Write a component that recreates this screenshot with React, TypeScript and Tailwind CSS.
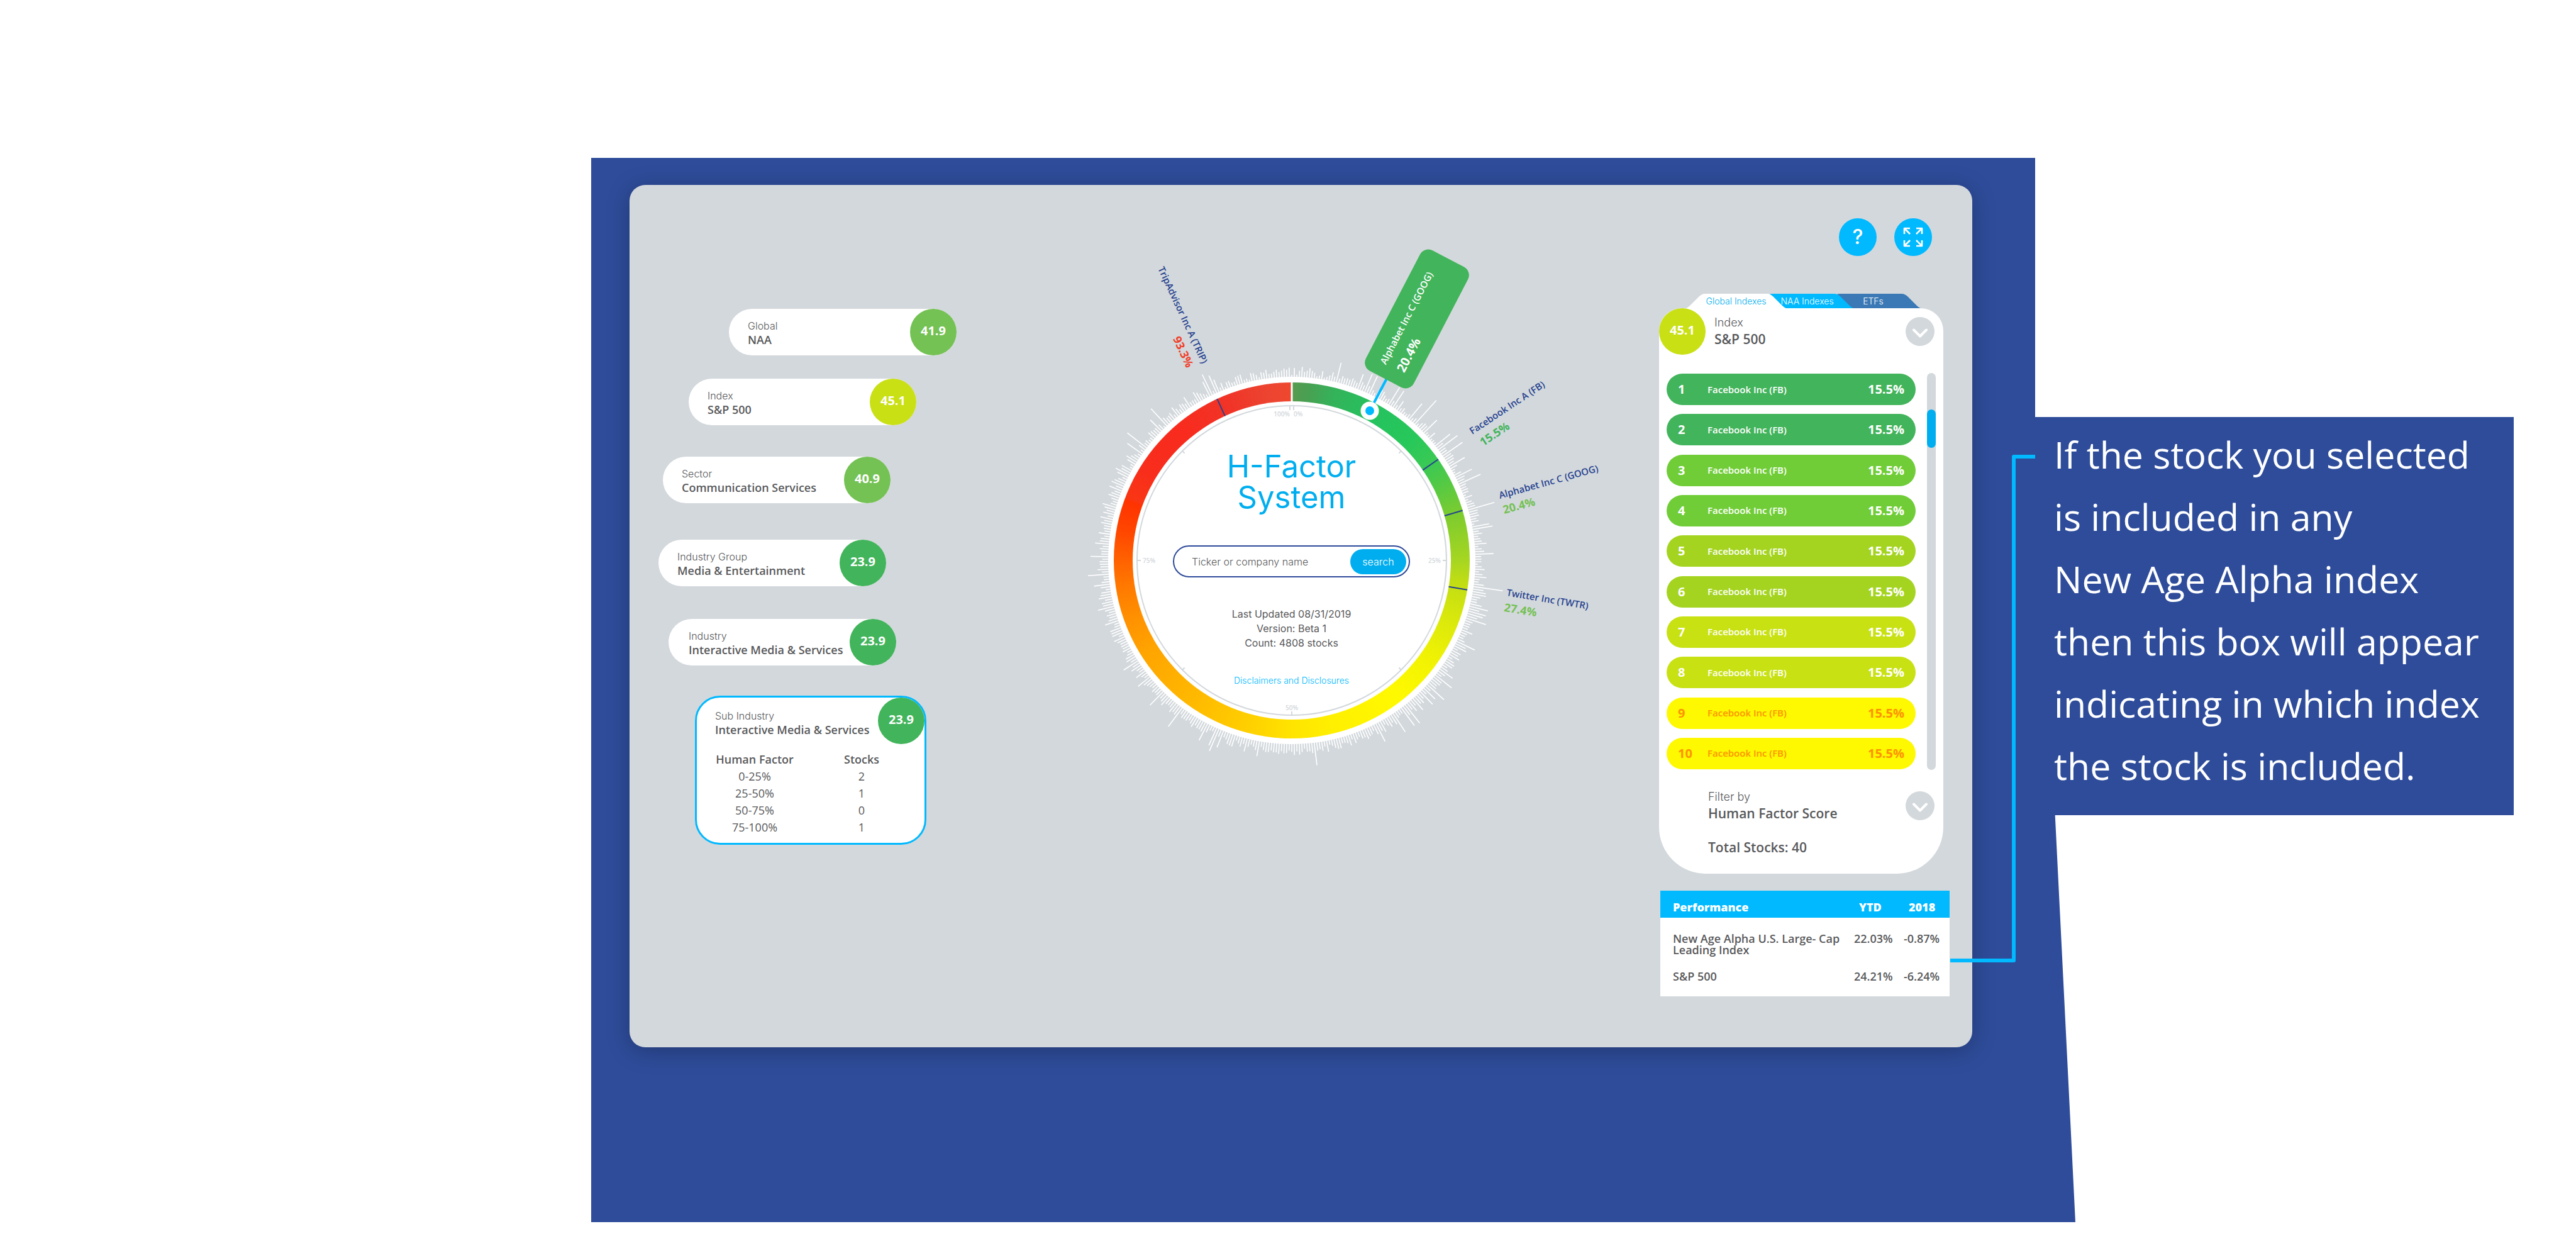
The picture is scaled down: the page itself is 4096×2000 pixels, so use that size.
import React from "react";

type Level = { label: string; name: string; score: string; tone: string; place: string };

const LEVELS: Level[] = [
  { label: "Global", name: "NAA", score: "41.9", tone: "bg-[#74c154]", place: "ml-[158px] pl-[30px]" },
  { label: "Index", name: "S&P 500", score: "45.1", tone: "bg-[#c9e015]", place: "mt-[37px] ml-[94px] pl-[30px]" },
  { label: "Sector", name: "Communication Services", score: "40.9", tone: "bg-[#74c154]", place: "mt-[50px] ml-[53px] pl-[30px]" },
  { label: "Industry Group", name: "Media & Entertainment", score: "23.9", tone: "bg-[#42b45b]", place: "mt-[58px] ml-[46px] pl-[30px]" },
  { label: "Industry", name: "Interactive Media & Services", score: "23.9", tone: "bg-[#42b45b]", place: "mt-[52px] ml-[62px] pl-8" },
];

const BUCKETS = [
  ["0-25%", "2"],
  ["25-50%", "1"],
  ["50-75%", "0"],
  ["75-100%", "1"],
];

const ROW_TONES = [
  "bg-[#42b45b] text-white",
  "bg-[#42b45b] text-white",
  "bg-[#70cd37] text-white",
  "bg-[#70cd37] text-white",
  "bg-[#a4d420] text-white",
  "bg-[#a4d420] text-white",
  "bg-[#c8e113] text-white",
  "bg-[#c8e113] text-white",
  "bg-[#fef900] text-[#ff9100]",
  "bg-[#fef900] text-[#ff9100]",
];

/* Peaks of the distribution: [clockwise angle from the top, length]. */
const PEAKS: [number, number][] = [
  [2.8, 17], [5.3, 16], [14.4, 33], [21.1, 26], [23.4, 32], [25, 32], [31.8, 33], [33.3, 32], [35, 18], [40.1, 33],
  [41.8, 52], [46.2, 30], [51.5, 31], [53.1, 39], [55.4, 39], [59.2, 29], [62.9, 30], [65.3, 39], [74.4, 44],
  [79.7, 28], [80.5, 33], [85, 20], [88, 30], [90, 16], [97.9, 48], [99.5, 22], [100.9, 23], [104.7, 31],
  [105.6, 30], [107, 26], [108.5, 34], [116.1, 33], [118, 22], [126, 26], [128.2, 34], [132.7, 37], [134, 26],
  [135.8, 29], [138.8, 25], [142.1, 38], [143, 36], [146.4, 36], [153.1, 33], [158, 14], [162.2, 18], [173.3, 37],
  [190.4, 25], [194.2, 22], [202, 29], [203, 39], [204, 31], [207.5, 31], [211, 18], [216.3, 38], [224.5, 31],
  [230.5, 25], [237, 28], [247.4, 19], [251.1, 23], [255.6, 27], [259, 22], [262.3, 26], [266, 34], [271.2, 29],
  [274.9, 23], [277.8, 19], [283, 21], [286.7, 23], [292.5, 22], [294.1, 22], [297.7, 25], [302, 20], [305.3, 30],
  [307.6, 40], [315, 26], [317.3, 38], [321.8, 18], [326.2, 20], [329.9, 19], [333.6, 26], [334.6, 37],
  [335.9, 31], [337, 22], [342.7, 14], [344, 15], [348.6, 13], [352.5, 15],
];

const BAR_COUNT = 462;
const DISC = 291;

const SPIKES = Array.from({ length: BAR_COUNT }, (_, i) => {
  const angle = (i * 360) / BAR_COUNT;
  const peak = PEAKS.find(([a]) => Math.abs(a - angle) <= 180 / BAR_COUNT);
  const noise = Math.abs(Math.sin(i * 12.9898) * 43758.5453) % 1;
  const floor = angle > 95 && angle < 300 ? 8 : 4;
  return { angle, length: peak ? peak[1] : floor + noise * 12 };
});

function polar(angle: number, radius: number) {
  const t = (angle * Math.PI) / 180;
  return { x: Math.sin(t) * radius, y: -Math.cos(t) * radius };
}

function Radial({ angle, from, to }: { angle: number; from: number; to: number }) {
  const a = polar(angle, from);
  const b = polar(angle, to);
  return <line x1={a.x} y1={a.y} x2={b.x} y2={b.y} />;
}

function Chevron() {
  return (
    <svg viewBox="0 0 46 46" className="size-full" fill="none" stroke="white" strokeWidth="4" strokeLinecap="round" strokeLinejoin="round" aria-hidden="true">
      <path d="M13 20.5 23 30.5 33 20.5" />
    </svg>
  );
}

function Score({ tone, children }: { tone: string; children: React.ReactNode }) {
  return (
    <span className={`flex size-[74px] shrink-0 items-center justify-center rounded-full pb-1 text-xl font-bold text-white ${tone}`}>
      {children}
    </span>
  );
}

function LevelPill({ level }: { level: Level }) {
  return (
    <div className={`flex h-[74px] w-[362px] items-center justify-between rounded-full bg-white ${level.place}`}>
      <p className="pt-0.5 text-lg leading-[22px] whitespace-nowrap">
        <span className="block font-['Inter',sans-serif] text-base leading-[22px] font-light">{level.label}</span>
        <span className="block leading-[22px] font-semibold">{level.name}</span>
      </p>
      <Score tone={level.tone}>{level.score}</Score>
    </div>
  );
}

function SubIndustry() {
  return (
    <section className="relative mt-12 ml-[104px] h-[237px] w-[368px] rounded-[40px] border-[3px] border-[#00b9ff] bg-white pt-[18px] pl-[29px] text-lg leading-[22px]">
      <div className="absolute top-0 right-0">
        <Score tone="bg-[#42b45b]">23.9</Score>
      </div>
      <p className="font-['Inter',sans-serif] text-base leading-[22px] font-light">Sub Industry</p>
      <p className="leading-[22px] font-semibold">Interactive Media &amp; Services</p>
      <table className="mt-[23px] w-[296px] table-fixed text-center leading-[27px]">
        <thead>
          <tr>
            <th className="w-[126px] p-0 font-semibold whitespace-nowrap">Human Factor</th>
            <th className="p-0 pl-[44px] font-semibold">Stocks</th>
          </tr>
        </thead>
        <tbody>
          {BUCKETS.map(([range, count]) => (
            <tr key={range}>
              <td className="p-0">{range}</td>
              <td className="p-0 pl-[44px]">{count}</td>
            </tr>
          ))}
        </tbody>
      </table>
    </section>
  );
}

type StockLabelProps = { x: number; y: number; rotate: number; name: string; value: string; tone: string; indent?: number; end?: boolean };

function StockLabel({ x, y, rotate, name, value, tone, indent = 0, end = false }: StockLabelProps) {
  return (
    <g transform={`translate(${x} ${y}) rotate(${rotate})`}>
      <text className="fill-[#26428f] text-[15px] font-semibold" textAnchor={end ? "end" : "start"}>
        {name}
      </text>
      <text className={`text-[18px] font-bold ${tone}`} x={indent} y={25} textAnchor={end ? "end" : "start"}>
        {value}
      </text>
    </g>
  );
}

function DialBackdrop() {
  return (
    <svg viewBox="-500 -500 1000 1000" className="pointer-events-none absolute top-1/2 left-1/2 size-[1000px] max-w-none -translate-1/2" aria-hidden="true">
      <g stroke="white" strokeWidth="1.6">
        {SPIKES.map((s) => (
          <Radial key={s.angle} angle={s.angle} from={DISC - 2} to={DISC + s.length} />
        ))}
      </g>
    </svg>
  );
}

function DialOverlay() {
  return (
    <svg viewBox="-500 -500 1000 1000" className="pointer-events-none absolute top-1/2 left-1/2 size-[1000px] max-w-none -translate-1/2" role="img" aria-label="Stocks by H-Factor">
      <g fill="none" stroke="#d3d8dc" strokeWidth="2">
        <circle r="246" />
        <path d="M-3 -246V-239M3 -246V-239M0 246V240M-246 0H-240M246 0H240" />
        {[45, 135, 225, 315].map((a) => (
          <Radial key={a} angle={a} from={241} to={246} />
        ))}
      </g>
      <g className="fill-[#d3d8dc] text-[10px] font-semibold">
        <text x="-3" y="-229" textAnchor="end">100%</text>
        <text x="3" y="-229">0%</text>
        <text x="237" y="4" textAnchor="end">25%</text>
        <text x="0" y="238" textAnchor="middle">50%</text>
        <text x="-237" y="4">75%</text>
      </g>
      <line x1="0" y1="-284" x2="0" y2="-252" stroke="white" strokeWidth="3" />
      <g stroke="#26428f" strokeWidth="2">
        {[55.4, 73.7, 99.5, 335.2].map((a) => (
          <Radial key={a} angle={a} from={253} to={283} />
        ))}
      </g>
      <line x1="124" y1="-238" x2="153" y2="-293" stroke="#00b9ff" strokeWidth="4" />
      <circle cx="124" cy="-238" r="14.5" fill="white" />
      <circle cx="124" cy="-238" r="7" fill="#00b9ff" />
      <g transform="translate(199 -384) rotate(-62.5)">
        <rect x="-108" y="-43" width="216" height="86" rx="15" fill="#42b45b" />
        <text x="-88" y="-10" className="fill-white text-[15px] font-semibold">Alphabet Inc C (GOOG)</text>
        <text x="-86" y="22" className="fill-white text-[20px] font-bold">20.4%</text>
      </g>
      <StockLabel x={-143} y={-312} rotate={65.3} name="TripAdvisor Inc A (TRIP)" value="93.3%" tone="fill-[#f03e28]" indent={-4} end />
      <StockLabel x={287} y={-200} rotate={-33.5} name="Facebook Inc A (FB)" value="15.5%" tone="fill-[#42b45b]" indent={4} />
      <StockLabel x={331} y={-98} rotate={-15.5} name="Alphabet Inc C (GOOG)" value="20.4%" tone="fill-[#74c154]" />
      <StockLabel x={341} y={56} rotate={9.5} name="Twitter Inc (TWTR)" value="27.4%" tone="fill-[#74c154]" />
    </svg>
  );
}

function Dial() {
  return (
    <section className="relative mt-[305px] size-[584px] rounded-full font-['Inter',sans-serif]">
      <DialBackdrop />
      <div className="relative size-full rounded-full bg-white p-[9px]">
        <div className="size-full rounded-full bg-[conic-gradient(#579b4f_0deg,#4a9f52_5deg,#34b25a_14deg,#25c15f_28deg,#27c85a_45deg,#3bc954_55deg,#50c946_62deg,#7fcc2e_75deg,#a6d621_90deg,#c0dd14_97deg,#d9e80c_110deg,#f0f203_125deg,#fff900_142deg,#fff000_165deg,#ffe400_180deg,#ffcf00_195deg,#ffb900_215deg,#ffa400_238deg,#ff9100_250deg,#ff7700_262deg,#ff6200_270deg,#ff4600_280deg,#ff3300_290deg,#f93614_291deg,#f82d1c_302deg,#f82b1e_320deg,#f03427_338deg,#ec4430_352deg,#ef4830_360deg)] p-[30px]">
          <div className="flex size-full flex-col items-center rounded-full bg-white pt-[79px] text-center text-base text-[#58595b]">
            <h1 className="text-[49px] leading-[49px] font-normal text-[#00aeef]">
              H-Factor
              <br />
              System
            </h1>
            <form className="mt-[52px] flex h-[51px] w-[377px] items-center rounded-full border-2 border-[#2e4b9a] pr-[4px] pl-7 font-light" onSubmit={(e) => e.preventDefault()}>
              <input type="text" aria-label="Ticker or company name" placeholder="Ticker or company name" className="min-w-0 flex-1 outline-none placeholder:text-[#58595b]" />
              <button type="submit" className="h-10 w-[89px] rounded-full bg-[#00aeef] text-base text-white">search</button>
            </form>
            <p className="mt-[47px] leading-[23px]">
              Last Updated 08/31/2019
              <br />
              Version: Beta 1
              <br />
              Count: 4808 stocks
            </p>
            <a href="#disclosures" className="mt-[38px] text-sm font-light text-[#00b9ff]">Disclaimers and Disclosures</a>
          </div>
        </div>
      </div>
      <div className="font-['Open_Sans',sans-serif]">
        <DialOverlay />
      </div>
    </section>
  );
}

function Tab({ label, fill, className }: { label: string; fill: string; className: string }) {
  return (
    <button type="button" role="tab" className={`relative h-6 w-[165px] text-sm leading-none font-light ${className}`}>
      <svg viewBox="0 0 165 24" className="absolute inset-0 size-full" aria-hidden="true">
        <path className={fill} d="M0 24C5 23 8 20 11 17L23 5C26 2 29 0 34 0H131C136 0 139 2 142 5L154 17C157 20 160 23 165 24Z" />
      </svg>
      <span className="relative">{label}</span>
    </button>
  );
}

function IndexPanel() {
  return (
    <div className="mt-[60px] w-[452px]">
      <div role="tablist" className="ml-10 flex font-['Inter',sans-serif]">
        <Tab label="Global Indexes" fill="fill-white" className="z-20 text-[#00aeef]" />
        <Tab label="NAA Indexes" fill="fill-[#00b9ff]" className="z-10 -ml-[58px] pl-3 text-white" />
        <Tab label="ETFs" fill="fill-[#3a79b5]" className="-ml-[58px] pl-2 text-white" />
      </div>
      <section className="relative z-30 -mt-px rounded-t-[36px] rounded-b-[74px] bg-white pb-[28px]">
        <header className="flex items-start">
          <Score tone="bg-[#c9e015]">45.1</Score>
          <p className="ml-[14px] flex-1 pt-[9px] text-[21px] leading-[27px] font-semibold">
            <span className="block font-['Inter',sans-serif] text-lg leading-[27px] font-light">Index</span>
            S&amp;P 500
          </p>
          <button type="button" aria-label="Choose index" className="mt-[14px] mr-[14px] size-[46px] rounded-full bg-[#d3d8dc]">
            <Chevron />
          </button>
        </header>
        <div className="mt-[29px] flex h-[631px] justify-between pr-3 pl-3">
          <ol className="flex w-[396px] flex-col justify-between py-px">
            {ROW_TONES.map((tone, i) => (
              <li key={i} className={`flex h-[50px] items-center rounded-full px-[18px] text-xl font-bold ${tone}`}>
                <span className="w-[47px]">{i + 1}</span>
                <span className="flex-1 text-[15px] font-semibold">Facebook Inc (FB)</span>
                <span>15.5%</span>
              </li>
            ))}
          </ol>
          <div className="w-[14px] rounded-full bg-[#d3d8dc] pt-[58px]">
            <div className="h-[61px] rounded-full bg-[#00aeef]" />
          </div>
        </div>
        <footer className="flex items-start pt-[29px] pl-[78px] text-[21px] leading-[27px] font-semibold">
          <p className="flex-1">
            <span className="block font-['Inter',sans-serif] text-lg leading-[27px] font-light">Filter by</span>
            Human Factor Score
            <span className="mt-[27px] block">Total Stocks: 40</span>
          </p>
          <button type="button" aria-label="Choose filter" className="mt-[5px] mr-[14px] size-[46px] rounded-full bg-[#d3d8dc]">
            <Chevron />
          </button>
        </footer>
      </section>
    </div>
  );
}

function PerformanceTable() {
  return (
    <table className="mt-[27px] ml-[2px] w-[460px] table-fixed bg-white text-left text-lg leading-[18px] font-semibold">
      <thead className="bg-[#00b9ff] text-white">
        <tr className="h-[43px]">
          <th className="p-0 pt-2 pl-5 font-extrabold">Performance</th>
          <th className="w-[79px] p-0 pt-2 pl-2 font-extrabold">YTD</th>
          <th className="w-[73px] p-0 pt-2 pl-2 font-extrabold">2018</th>
        </tr>
      </thead>
      <tbody className="align-top">
        <tr className="h-[76px]">
          <td className="p-0 pt-[24px] pl-5">New Age Alpha U.S. Large- Cap Leading Index</td>
          <td className="p-0 pt-[24px]">22.03%</td>
          <td className="p-0 pt-[24px]">-0.87%</td>
        </tr>
        <tr className="h-[49px]">
          <td className="p-0 pt-2 pl-5">S&amp;P 500</td>
          <td className="p-0 pt-2">24.21%</td>
          <td className="p-0 pt-2">-6.24%</td>
        </tr>
      </tbody>
    </table>
  );
}

function Toolbar() {
  return (
    <div className="flex w-[452px] justify-end gap-7 pr-[18px] text-white">
      <button type="button" aria-label="Help" className="size-[60px] rounded-full bg-[#00b9ff] font-['Inter',sans-serif] text-[32px] leading-none font-medium">?</button>
      <button type="button" aria-label="Full screen" className="flex size-[60px] items-center justify-center rounded-full bg-[#00b9ff]">
        <svg viewBox="0 0 32 32" className="size-8" fill="none" stroke="currentColor" strokeWidth="2.6" strokeLinejoin="round" aria-hidden="true">
          <path d="M2 11V2H11M2 2 11 11M21 2H30V11M30 2 21 11M2 21V30H11M2 30 11 21M30 21V30H21M30 30 21 21" />
        </svg>
      </button>
    </div>
  );
}

function Callout() {
  return (
    <aside className="relative mt-[412px] self-start bg-[#2e4c9a] pt-[10px] pb-[29px] pl-[30px] text-[59px] leading-[99px] whitespace-nowrap text-white">
      <svg viewBox="0 0 135 808" className="absolute top-[60px] right-full h-[808px] w-[135px]" fill="none" stroke="#00b9ff" strokeWidth="6" strokeLinejoin="round" aria-hidden="true">
        <path d="M135 3H101V804H0" />
      </svg>
      <p>
        If the stock you selected
        <br />
        is included in any
        <br />
        New Age Alpha index
        <br />
        then this box will appear
        <br />
        indicating in which index
        <br />
        the stock is included.
      </p>
    </aside>
  );
}

export default function App() {
  return (
    <main className="grid min-h-screen grid-cols-[940fr_2296fr_761fr_99fr] content-start bg-white pt-[251px] font-['Open_Sans',sans-serif] text-[#58595b]">
      <div className="relative col-start-2 bg-[#2e4c9a] pt-[43px] pr-[100px] pb-[278px] pl-[61px]">
        <div className="absolute bottom-0 left-full h-[1281px] w-16 bg-[#2e4c9a] [clip-path:polygon(0_0,100%_100%,0_100%)]" />
        <div className="grid grid-cols-[520px_1fr_550px] rounded-[25px] bg-[#d3d8dc] shadow-[0_6px_36px_rgba(0,0,0,0.25)]">
          <div className="pt-[197px]">
            {LEVELS.map((level) => (
              <LevelPill key={level.label} level={level} />
            ))}
            <SubIndustry />
          </div>
          <div className="flex items-start justify-center">
            <Dial />
          </div>
          <div className="relative pt-[53px] pb-[81px] pl-[52px]">
            <Toolbar />
            <IndexPanel />
            <PerformanceTable />
          </div>
        </div>
      </div>
      <Callout />
    </main>
  );
}
